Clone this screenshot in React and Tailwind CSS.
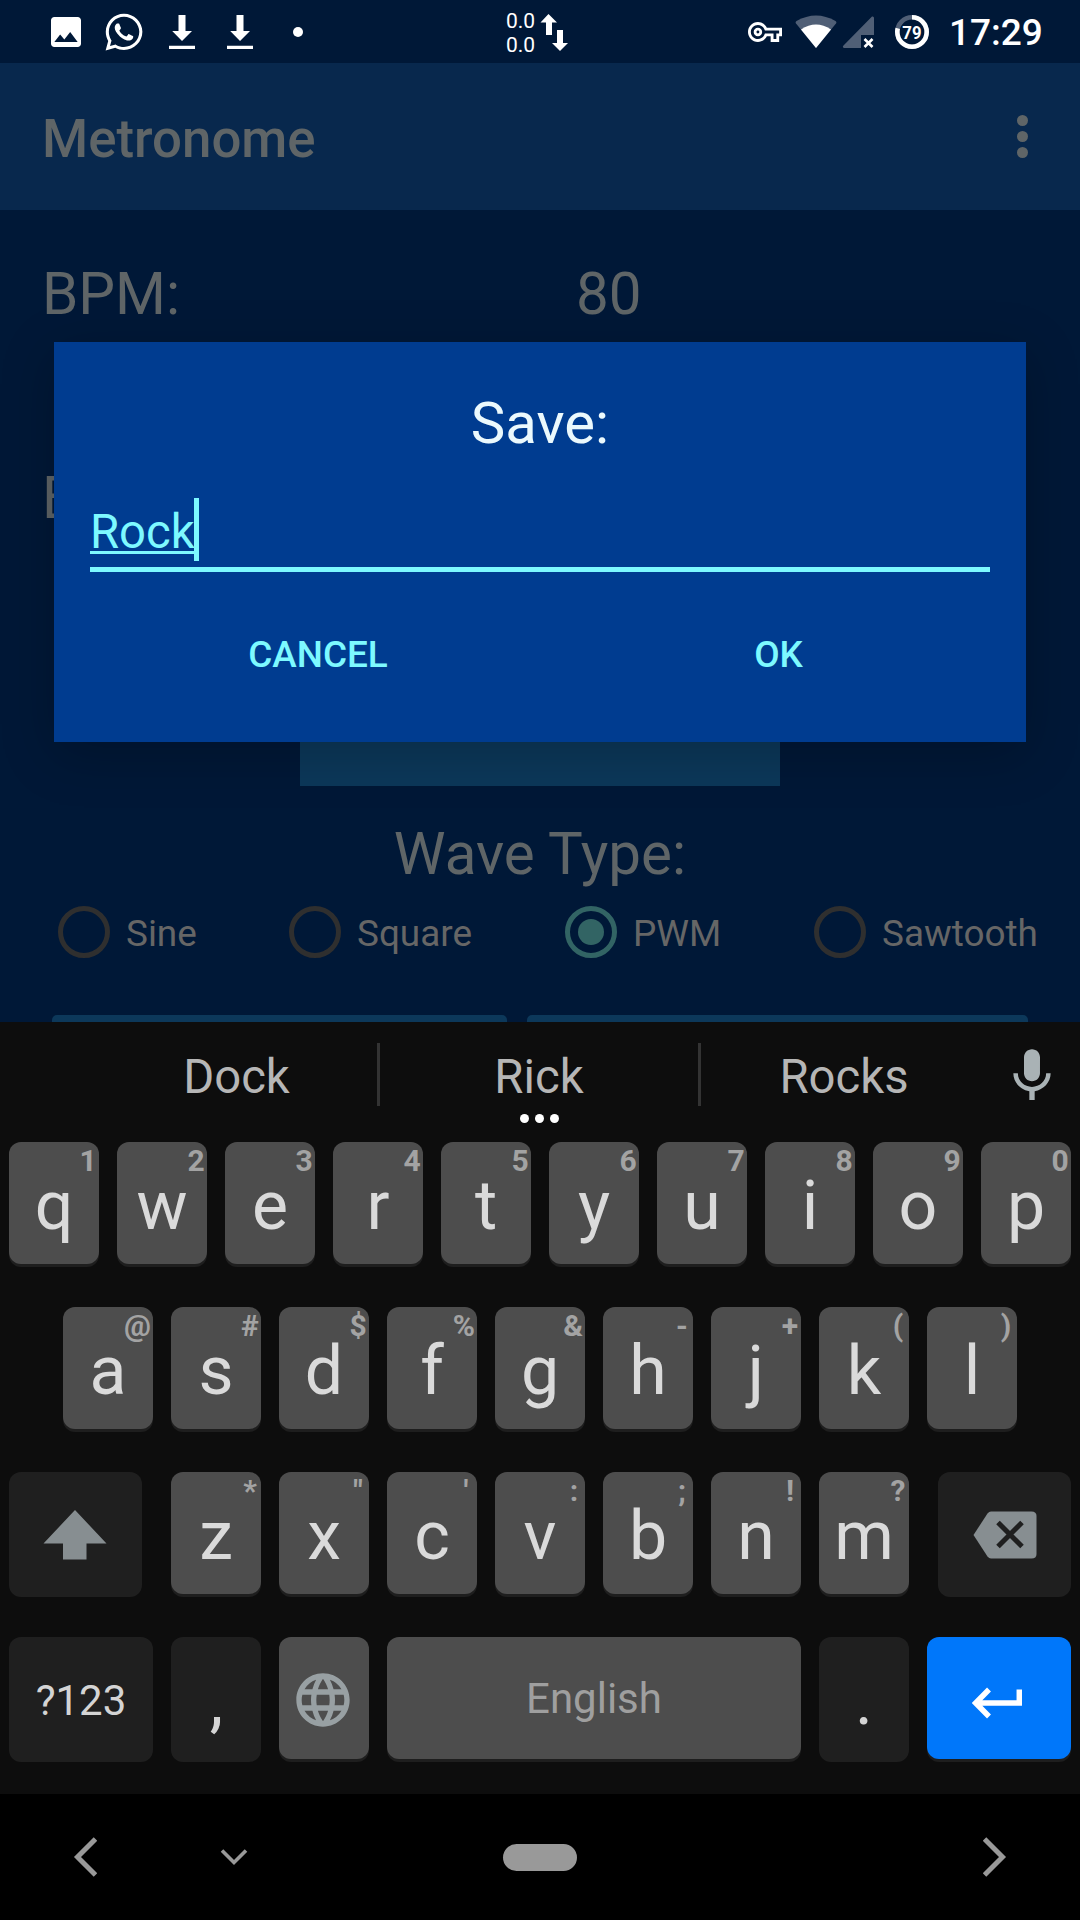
import React from "react";
import { MdImage, MdOutlineVpnKey, MdMic, MdLanguage } from "react-icons/md";
import { FaWhatsapp } from "react-icons/fa";

const LETTER_ROWS = [
  [["q", "1"], ["w", "2"], ["e", "3"], ["r", "4"], ["t", "5"], ["y", "6"], ["u", "7"], ["i", "8"], ["o", "9"], ["p", "0"]],
  [["a", "@"], ["s", "#"], ["d", "$"], ["f", "%"], ["g", "&"], ["h", "-"], ["j", "+"], ["k", "("], ["l", ")"]],
  [["z", "*"], ["x", '"'], ["c", "'"], ["v", ":"], ["b", ";"], ["n", "!"], ["m", "?"]],
];

function DownloadIcon() {
  return (
    <svg width="26" height="36" viewBox="0 0 26 36" fill="#fff">
      <path d="M9.5 1h7v16H23L13 27 3.200 17h6.300zM0 31.700h26V35H0z" />
    </svg>
  );
}

function StatusBar() {
  return (
    <header className="flex h-[63px] shrink-0 items-center bg-[#001837] text-white">
      <div className="flex w-[506px] items-center pl-[46px]">
        <MdImage className="size-[40px]" />
        <FaWhatsapp className="ml-[17px] size-[42px]" />
        <div className="ml-[24px] flex gap-8">
          <DownloadIcon />
          <DownloadIcon />
        </div>
        <div className="ml-[40px] size-[10px] rounded-full bg-white" />
      </div>
      <div className="flex w-[242px] items-center gap-[5px]">
        <div className="pt-[2px] text-[21px] leading-[24px]">
          <div>0.0</div>
          <div>0.0</div>
        </div>
        <svg width="28" height="38" viewBox="0 0 28 38" fill="#fff">
          <path d="M8.500 1L17 9.500h-5V22H6V9.500H.5zM17 17h6v13h5l-8 8-8-8h5z" />
        </svg>
      </div>
      <MdOutlineVpnKey className="size-[34px]" />
      <svg className="ml-[13px] shrink-0" width="42" height="34" viewBox="0 0 42 34">
        <path d="M21 33L1 8.500Q0 7 1.500 6Q21-5 40.500 6Q42 7 41 8.500z" fill="#505f76" />
        <path d="M21 33L6 14.500Q21 4.500 36 14.500z" fill="#fff" />
      </svg>
      <svg className="ml-[5px] shrink-0" width="33" height="34" viewBox="0 0 33 34">
        <path d="M30 1.500Q32 1 32 3V20H19V33H2Q0 32 1.500 30.500z" fill="#505f76" />
        <path d="M22.500 24l8 8M30.500 24l-8 8" stroke="#fff" strokeWidth="2.600" />
      </svg>
      <div className="relative ml-[19px] flex size-[36px] shrink-0 items-center justify-center">
        <svg className="absolute inset-0 -rotate-90" width="36" height="36" viewBox="0 0 36 36" fill="none" strokeWidth="4.600">
          <circle cx="18" cy="18" r="14.700" stroke="#505f76" />
          <circle cx="18" cy="18" r="14.700" stroke="#fff" pathLength="100" strokeDasharray="79 21" />
        </svg>
        <span className="scale-x-[0.88] pt-px text-[19px] leading-none font-bold">79</span>
      </div>
      <span className="ml-[19px] pt-[3px] text-[37px] leading-[40px] font-medium">17:29</span>
    </header>
  );
}

function AppBar() {
  return (
    <div className="flex h-[147px] shrink-0 items-center justify-between bg-[#08284d] pr-[52px] pl-[42px]">
      <h1 className="pt-[5px] text-[52.8px] leading-[62px] font-medium text-[#5f6567]">Metronome</h1>
      <div className="flex flex-col gap-[5px]">
        <span className="size-[11px] rounded-full bg-[#5f6567]" />
        <span className="size-[11px] rounded-full bg-[#5f6567]" />
        <span className="size-[11px] rounded-full bg-[#5f6567]" />
      </div>
    </div>
  );
}

function Radio({ label, checked, className }) {
  return (
    <div className={"flex h-[52px] items-center " + className}>
      <span
        className={
          "flex size-[52px] shrink-0 items-center justify-center rounded-full border-[5px] " +
          (checked ? "border-[#326464]" : "border-[#2f2f2f]")
        }
      >
        {checked && <span className="size-[26px] rounded-full bg-[#326464]" />}
      </span>
      <span className="pt-[3px] pl-[16px] text-[36.9px] leading-[44px] text-[#666666]">{label}</span>
    </div>
  );
}

function MetronomePage() {
  return (
    <main className="flex h-[812px] shrink-0 flex-col overflow-hidden text-[58.3px] leading-[68px] text-[#5f6567]">
      <div className="mt-[50px] flex pl-[42px]">
        <span className="w-[534px]">BPM:</span>
        <span>80</span>
      </div>
      <div className="mt-[136px] pl-[42px]">B</div>
      <div className="mx-auto mt-[174px] h-[80px] w-[480px] shrink-0 bg-[#0c385a]" />
      <div className="mt-[34px] text-center">Wave Type:</div>
      <div className="mt-[18px] flex pl-[58px]">
        <Radio label="Sine" className="w-[231px]" />
        <Radio label="Square" className="w-[276px]" />
        <Radio label="PWM" checked className="w-[249px]" />
        <Radio label="Sawtooth" className="w-[240px]" />
      </div>
      <div className="mt-[57px] flex gap-[20px] pl-[52px]">
        <div className="h-[7px] w-[455px] rounded-t-[5px] bg-[#0c385a]" />
        <div className="h-[7px] w-[501px] rounded-t-[5px] bg-[#0c385a]" />
      </div>
    </main>
  );
}

function SaveDialog() {
  return (
    <div className="absolute top-[342px] left-[54px] flex h-[400px] w-[972px] flex-col bg-[#003c90] px-[36px] shadow-[0_12px_50px_rgba(0,0,0,0.22)]">
      <h2 className="mt-[47px] text-center text-[58.1px] leading-[68px] text-[#ebf9fd]">Save:</h2>
      <div className="mt-[41px] flex h-[74px] border-b-[5px] border-[#7df9ff] text-[47.25px] text-[#7df9ff]">
        <span className="mt-[5px] -mr-px h-[51px] border-b-[3px] border-[#7df9ff] leading-[58px]">Rock</span>
        <span className="h-[63px] w-[5px] bg-[#7df9ff]" />
      </div>
      <div className="mt-[61px] flex text-center text-[36.9px] leading-[44px] font-medium text-[#7df9ff]">
        <span className="w-[456px] shrink-0">CANCEL</span>
        <span className="w-[465px] shrink-0">OK</span>
      </div>
    </div>
  );
}

function LetterKey({ letter, hint }) {
  return (
    <div className="relative h-[122px] w-[90px] rounded-[12px] bg-[#4d4d4d] text-center shadow-[0_3px_0_#1e1e1e]">
      <span className="block pt-[24px] text-[68px] leading-[80px] text-[#dadada]">{letter}</span>
      <span className="absolute top-0 right-[2px] min-w-[18px] text-[30px] leading-[37px] font-bold text-[#a3a3a3]">{hint}</span>
    </div>
  );
}

function DarkKey({ className, children }) {
  return (
    <div className={"flex h-[125px] items-center justify-center rounded-[12px] bg-[#1f1f1f] text-[#d4d4d4] " + className}>
      {children}
    </div>
  );
}

function Letters({ row }) {
  return row.map(([letter, hint]) => <LetterKey key={letter} letter={letter} hint={hint} />);
}

function Keyboard() {
  return (
    <section className="flex h-[772px] shrink-0 flex-col bg-[#0d0d0d]">
      <div className="flex h-[120px] text-[47.25px] leading-[56px] text-[#b6b6b6]">
        <div className="w-[377px] pt-[27px] pl-[96px] text-center">Dock</div>
        <div className="mt-[21px] h-[63px] w-[3px] bg-[#333333]" />
        <div className="flex w-[318px] flex-col items-center pt-[27px]">
          Rick
          <div className="mt-[9px] flex gap-[6px]">
            <span className="size-[9px] rounded-full bg-white" />
            <span className="size-[9px] rounded-full bg-white" />
            <span className="size-[9px] rounded-full bg-white" />
          </div>
        </div>
        <div className="mt-[21px] h-[63px] w-[3px] bg-[#333333]" />
        <div className="w-[286px] pt-[27px] text-center">Rocks</div>
        <MdMic className="mt-[22px] ml-[13px] size-[64px] text-[#a9b2b5]" />
      </div>

      <div className="flex flex-col gap-[40px]">
        <div className="flex h-[125px] gap-[18px] pl-[9px]">
          <Letters row={LETTER_ROWS[0]} />
        </div>
        <div className="flex h-[125px] gap-[18px] pl-[63px]">
          <Letters row={LETTER_ROWS[1]} />
        </div>
        <div className="flex h-[125px] gap-[18px] pl-[9px]">
          <DarkKey className="mr-[11px] w-[133px]">
            <svg className="mr-px" width="64" height="50" viewBox="0 0 64 50" fill="#878e91">
              <path d="M32 0l31.500 33.500H43.500V49.500h-23.500V33.500H.5z" />
            </svg>
          </DarkKey>
          <Letters row={LETTER_ROWS[2]} />
          <DarkKey className="ml-[11px] w-[133px]">
            <svg width="64" height="48" viewBox="0 0 64 48">
              <path d="M18 .5H58.500Q63.500 .5 63.500 5V43Q63.500 47.500 58.500 47.500H18Q16 47.500 14.500 45.500L.5 24L14.500 2.500Q16 .5 18 .5z" fill="#878e91" />
              <path d="M25 11.500l24 24M49 11.500l-24 24" stroke="#1f1f1f" strokeWidth="5" />
            </svg>
          </DarkKey>
        </div>
        <div className="flex h-[125px] gap-[18px] pl-[9px]">
          <DarkKey className="w-[144px] text-[42px]">
            <span className="pt-[2px]">?123</span>
          </DarkKey>
          <DarkKey className="w-[90px] text-[68px] leading-[80px]">
            <span className="pt-[3px] pl-px">,</span>
          </DarkKey>
          <div className="flex h-[122px] w-[90px] items-center justify-center rounded-[12px] bg-[#4d4d4d] shadow-[0_3px_0_#1e1e1e]">
            <MdLanguage className="mt-[3px] mr-[2px] size-[64px] text-[#98a0a3]" />
          </div>
          <div className="flex h-[122px] w-[414px] items-center justify-center rounded-[12px] bg-[#4d4d4d] text-[42px] text-[#9f9f9f] shadow-[0_3px_0_#1e1e1e]">
            English
          </div>
          <DarkKey className="w-[90px] text-[68px] leading-[80px]">
            <span className="pt-[3px]">.</span>
          </DarkKey>
          <div className="flex h-[122px] w-[144px] items-center justify-center rounded-[12px] bg-[#0077fa] shadow-[0_3px_0_#1e1e1e]">
            <svg className="mt-[9px] mr-[4px]" width="50" height="32" viewBox="0 0 50 32" fill="none" stroke="#fff" strokeWidth="5.500">
              <path d="M17 2.500L3.700 16L17 29.500M4.500 16H47.300V2.500" />
            </svg>
          </div>
        </div>
      </div>
    </section>
  );
}

function NavBar() {
  return (
    <nav className="flex h-[126px] shrink-0 items-center bg-black">
      <svg className="ml-[72px]" width="25" height="40" viewBox="0 0 25 40" fill="none" stroke="#999" strokeWidth="5">
        <path d="M23.500 2L5.500 20L23.500 38" />
      </svg>
      <svg className="ml-[123px]" width="28" height="18" viewBox="0 0 28 18" fill="none" stroke="#999" strokeWidth="3.600">
        <path d="M2 2.500L14 14.500L26 2.500" />
      </svg>
      <div className="ml-[255px] h-[27px] w-[74px] rounded-full bg-[#999999]" />
      <svg className="ml-[406px]" width="25" height="40" viewBox="0 0 25 40" fill="none" stroke="#999" strokeWidth="5">
        <path d="M1.500 2L19.500 20L1.500 38" />
      </svg>
    </nav>
  );
}

export default function App() {
  return (
    <div className="relative flex h-[1920px] w-[1080px] flex-col overflow-hidden bg-[#001837] font-[Roboto,sans-serif]">
      <StatusBar />
      <AppBar />
      <MetronomePage />
      <Keyboard />
      <NavBar />
      <SaveDialog />
    </div>
  );
}
